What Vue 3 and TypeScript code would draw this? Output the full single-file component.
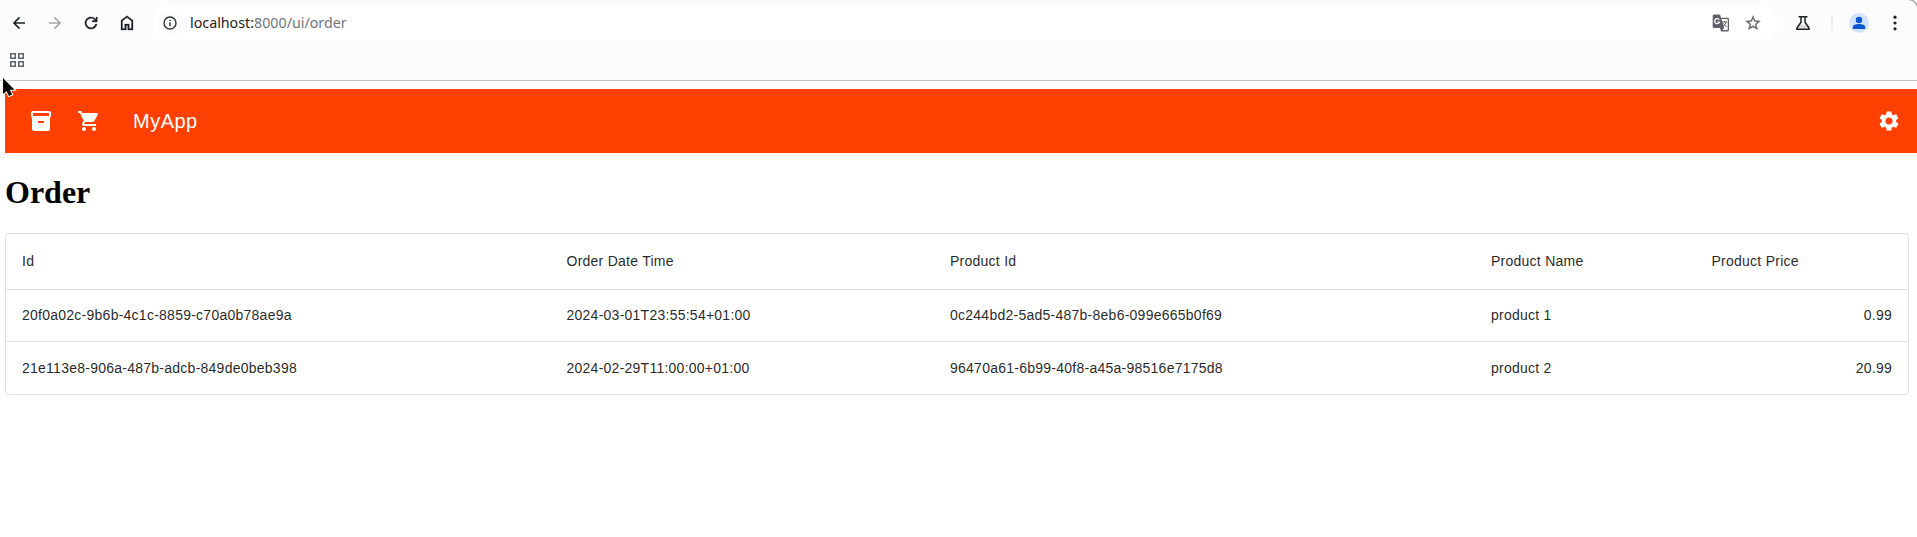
<script setup lang="ts">
interface Order {
  id: string
  dateTime: string
  productId: string
  productName: string
  price: string
}

const orders: Order[] = [
  {
    id: '20f0a02c-9b6b-4c1c-8859-c70a0b78ae9a',
    dateTime: '2024-03-01T23:55:54+01:00',
    productId: '0c244bd2-5ad5-487b-8eb6-099e665b0f69',
    productName: 'product 1',
    price: '0.99',
  },
  {
    id: '21e113e8-906a-487b-adcb-849de0beb398',
    dateTime: '2024-02-29T11:00:00+01:00',
    productId: '96470a61-6b99-40f8-a45a-98516e7175d8',
    productName: 'product 2',
    price: '20.99',
  },
]
</script>

<template>
  <div class="window">
    <header class="chrome">
      <div class="nav-row">
        <div class="nav-buttons">
          <svg class="i20" viewBox="0 0 20 20"><path d="M16 9.200H6.800l4.300-4.300L10 3.800 3.800 10l6.200 6.200 1.100-1.100-4.300-4.300H16z" /></svg>
          <svg class="i20 disabled" viewBox="0 0 20 20"><path d="M4 9.200h9.200L8.900 4.900 10 3.800l6.200 6.200-6.200 6.200-1.100-1.100 4.300-4.300H4z" /></svg>
          <svg class="i20 bold" viewBox="0 0 20 20"><path d="M10 16.100A6.100 6.100 0 1 1 14.400 5.800L15 6.400V4h1.300v5h-5V7.500H14l-.7-.7A4.600 4.600 0 1 0 14.450 11H16A6.100 6.100 0 0 1 10 16.100z" /></svg>
          <svg class="i20 bold" viewBox="0 0 20 20"><path d="M5.500 15.500h2.250V11h4.500v4.500h2.250V8L10 4.600 5.500 8v7.500zM4 17V7.250l6-4.550 6 4.550V17h-5.250v-4.500h-1.500V17H4z" /></svg>
        </div>
        <div class="address">
          <span class="info"><svg class="i16" viewBox="0 0 16 16"><circle cx="8" cy="8" r="6" fill="none" stroke="#303236" stroke-width="1.4" /><path d="M7.3 7.2h1.4v4H7.3zM7.3 4.7h1.4v1.4H7.3z" /></svg></span>
          <span class="url">localhost:<span class="path">8000/ui/order</span></span>
          <svg class="translate" viewBox="0 0 18 18"><path fill="#5f6368" d="M2 .5h6l1 3.300h6.700a1.300 1.300 0 0 1 1.300 1.300v11a1.300 1.300 0 0 1-1.300 1.300H9L8 14H2a1.300 1.300 0 0 1-1.300-1.300V1.800A1.300 1.300 0 0 1 2 .5z" /><path fill="#fff" d="M9.400 5.100l2.900 9-2 2h5.400v-11z" /><path fill="none" stroke="#fff" stroke-width="1.200" d="M7.300 5.800A2.500 2.500 0 1 0 7.500 8H5.300" /><path fill="none" stroke="#5f6368" stroke-width="1" d="M10 8h5M12.500 7v1M14.200 8q-.7 2.700-3.200 4M11.500 9.500l3 3.500" /></svg>
          <svg class="star" viewBox="0 0 24 24"><path fill="#5f6368" stroke="#5f6368" stroke-width=".3" d="M22 9.240l-7.190-.62L12 2 9.190 8.630 2 9.240l5.460 4.730L5.820 21 12 17.270 18.180 21l-1.630-7.030L22 9.240zM12 15.400l-3.760 2.270 1-4.280-3.320-2.880 4.380-.38L12 6.100l1.710 4.040 4.380.38-3.320 2.880 1 4.280L12 15.400z" /></svg>
        </div>
        <div class="actions">
          <svg class="flask" viewBox="0 0 16 16"><path fill="#ddd" d="M5 9.500h6l2.500 4h-11z" /><path fill="none" stroke="#1f2023" stroke-width="1.500" d="M3.500 1.750h9M6 2v5.200L1.900 13v1.200h12.200V13L10 7.200V2" /></svg>
          <span class="divider"></span>
          <span class="avatar"><svg viewBox="0 0 20 20"><circle cx="10" cy="7" r="3.200" /><path d="M3.800 16v-2.200C3.800 11.700 7.500 10.900 10 10.900s6.200.8 6.200 2.900V16z" /></svg></span>
          <svg class="kebab" viewBox="0 0 4 16"><circle cx="2" cy="2.200" r="1.600" /><circle cx="2" cy="8" r="1.600" /><circle cx="2" cy="13.800" r="1.600" /></svg>
        </div>
      </div>
      <div class="bookmarks">
        <svg viewBox="0 0 14 14" fill="none" stroke="#606468" stroke-width="1.500"><path d="M.75.75h4.500v4.500h-4.500zM8.750.75h4.500v4.500h-4.500zM.75 8.750h4.500v4.500h-4.500zM8.750 8.750h4.500v4.500h-4.500z" /></svg>
      </div>
    </header>

    <main>
      <nav class="toolbar">
        <svg viewBox="0 0 24 24"><path d="M20 2H4c-1 0-2 .9-2 2v3.010c0 .72.43 1.340 1 1.690V20c0 1.100 1.100 2 2 2h14c.9 0 2-.9 2-2V8.700c.57-.35 1-.97 1-1.690V4c0-1.100-1-2-2-2zm-5 12H9v-2h6v2zm5-7H4V4h16v3z" /></svg>
        <svg class="cart" viewBox="0 0 24 24"><path d="M7 18c-1.100 0-1.990.9-1.990 2S5.900 22 7 22s2-.9 2-2-.9-2-2-2zM1 2v2h2l3.600 7.590-1.350 2.450c-.16.28-.25.61-.25.96 0 1.100.9 2 2 2h12v-2H7.420c-.14 0-.25-.11-.25-.25l.03-.12.9-1.630h7.450c.75 0 1.410-.41 1.750-1.030l3.580-6.490c.08-.14.12-.31.12-.48 0-.55-.45-1-1-1H5.210l-.94-2H1zm16 16c-1.100 0-1.990.9-1.990 2s.89 2 1.990 2 2-.9 2-2-.9-2-2-2z" /></svg>
        <span class="brand">MyApp</span>
        <svg class="gear" viewBox="0 0 24 24"><path d="M19.140 12.940c.04-.3.060-.61.060-.94 0-.32-.02-.64-.07-.94l2.030-1.580c.18-.14.23-.41.12-.61l-1.920-3.320c-.12-.22-.37-.29-.59-.22l-2.390.96c-.5-.38-1.030-.7-1.620-.94l-.36-2.540c-.04-.24-.24-.41-.48-.41h-3.840c-.24 0-.43.17-.47.41l-.36 2.540c-.59.24-1.130.57-1.620.94l-2.390-.96c-.22-.08-.47 0-.59.22L2.740 8.870c-.12.21-.08.47.12.61l2.030 1.580c-.05.3-.09.63-.09.94s.02.64.07.94l-2.030 1.580c-.18.14-.23.41-.12.61l1.920 3.320c.12.22.37.29.59.22l2.390-.96c.5.38 1.030.7 1.620.94l.36 2.540c.05.24.24.41.48.41h3.840c.24 0 .44-.17.47-.41l.36-2.540c.59-.24 1.130-.56 1.620-.94l2.390.96c.22.08.47 0 .59-.22l1.920-3.320c.12-.22.07-.47-.12-.61l-2.010-1.580zM12 15.600c-1.980 0-3.600-1.620-3.600-3.600s1.620-3.600 3.600-3.600 3.600 1.620 3.600 3.600-1.620 3.600-3.600 3.600z" /></svg>
      </nav>
      <h1>Order</h1>
      <div class="table-box">
        <table>
          <colgroup><col class="c-id" /><col class="c-date" /><col class="c-pid" /><col class="c-name" /><col /></colgroup>
          <thead>
            <tr><th>Id</th><th>Order Date Time</th><th>Product Id</th><th>Product Name</th><th>Product Price</th></tr>
          </thead>
          <tbody>
            <tr v-for="order in orders" :key="order.id">
              <td>{{ order.id }}</td>
              <td>{{ order.dateTime }}</td>
              <td>{{ order.productId }}</td>
              <td>{{ order.productName }}</td>
              <td class="price">{{ order.price }}</td>
            </tr>
          </tbody>
        </table>
      </div>
    </main>
    <svg class="cursor" viewBox="0 0 16 23"><path d="M2 2v16l3.600-3 2.300 5 3.200-1.500-2.200-4.700h4.600z" /></svg>
  </div>
</template>

<style>
body { margin: 0; background: #fff; }
</style>

<style scoped>
.window { position: relative; height: 537px; overflow: hidden; }
svg { display: block; flex: none; }
.chrome { box-sizing: border-box; height: 81px; background: #fcfcfc; border-bottom: 1px solid #c4c7cc; fill: #1f2023; border-radius: 4px 9px 0 0; box-shadow: 1px -1px 0 #aaa; }
.nav-row { display: flex; align-items: center; height: 46px; }
.nav-buttons { display: flex; gap: 16px; padding-left: 9px; }
.i20 { width: 20px; height: 20px; }
.i16 { width: 16px; height: 16px; }
.bold { stroke: #1f2023; stroke-width: .3; }
.disabled { fill: #a9a9a9; }
.address { display: flex; align-items: center; box-sizing: border-box; width: 1624px; height: 34px; margin-left: 16px; padding: 0 15px 0 4px; border-radius: 17px; background: #fff; }
.info { display: flex; align-items: center; justify-content: center; width: 26px; height: 26px; border-radius: 50%; background: #fcfcfc; }
.url { flex: 1; margin-left: 7px; font: 14.25px/20px "Noto Sans", sans-serif; color: #1f2023; }
.path { color: #70757a; }
.translate { width: 18px; height: 18px; }
.star { width: 18px; height: 18px; margin-left: 14px; }
.actions { display: flex; align-items: center; }
.flask { width: 16px; height: 16px; margin-left: 18px; }
.divider { width: 2px; height: 16px; margin-left: 20px; background: #eee; }
.avatar { width: 20px; height: 20px; margin-left: 16px; border-radius: 50%; background: #d3e3fd; fill: #0b57d0; }
.kebab { width: 4px; height: 16px; margin-left: 24px; }
.bookmarks { padding: 7px 0 0 10px; }
.bookmarks svg { width: 14px; height: 14px; }
main { padding: 8px 0 0 5px; }
.toolbar { display: flex; align-items: center; box-sizing: border-box; height: 64px; padding: 0 16px 0 24px; background: #ff4000; color: #fff; fill: #fff; }
.toolbar svg { width: 24px; height: 24px; }
.toolbar .cart { margin-left: 24px; }
.brand { margin-left: 32px; font: 500 20px/32px "Liberation Sans", sans-serif; letter-spacing: .5px; }
.toolbar .gear { margin-left: auto; }
h1 { margin: 21px 0 22px; font: bold 32px/37px "Liberation Serif", serif; color: #000; }
.table-box { box-sizing: border-box; width: 1904px; height: 162px; border: 1px solid #e0e0e0; border-radius: 4px; overflow: hidden; }
table { width: 100%; border-collapse: separate; border-spacing: 0; table-layout: fixed; font: 14px/20px "Liberation Sans", sans-serif; letter-spacing: .25px; color: rgba(0, 0, 0, .87); }
.c-id { width: 544.5px; }
.c-date { width: 383.5px; }
.c-pid { width: 541px; }
.c-name { width: 220.5px; }
th, td { box-sizing: border-box; padding: 0 16px; text-align: left; font-weight: 400; }
th { height: 56px; padding-bottom: 2px; border-bottom: 1px solid #e0e0e0; }
td { height: 52px; }
tbody tr:not(:last-child) td { padding-bottom: 2px; border-bottom: 1px solid #e0e0e0; }
td.price { text-align: right; }
.cursor { position: absolute; left: 1px; top: 76px; width: 16px; height: 23px; fill: #000; stroke: #fff; stroke-width: 2px; paint-order: stroke; }
</style>
